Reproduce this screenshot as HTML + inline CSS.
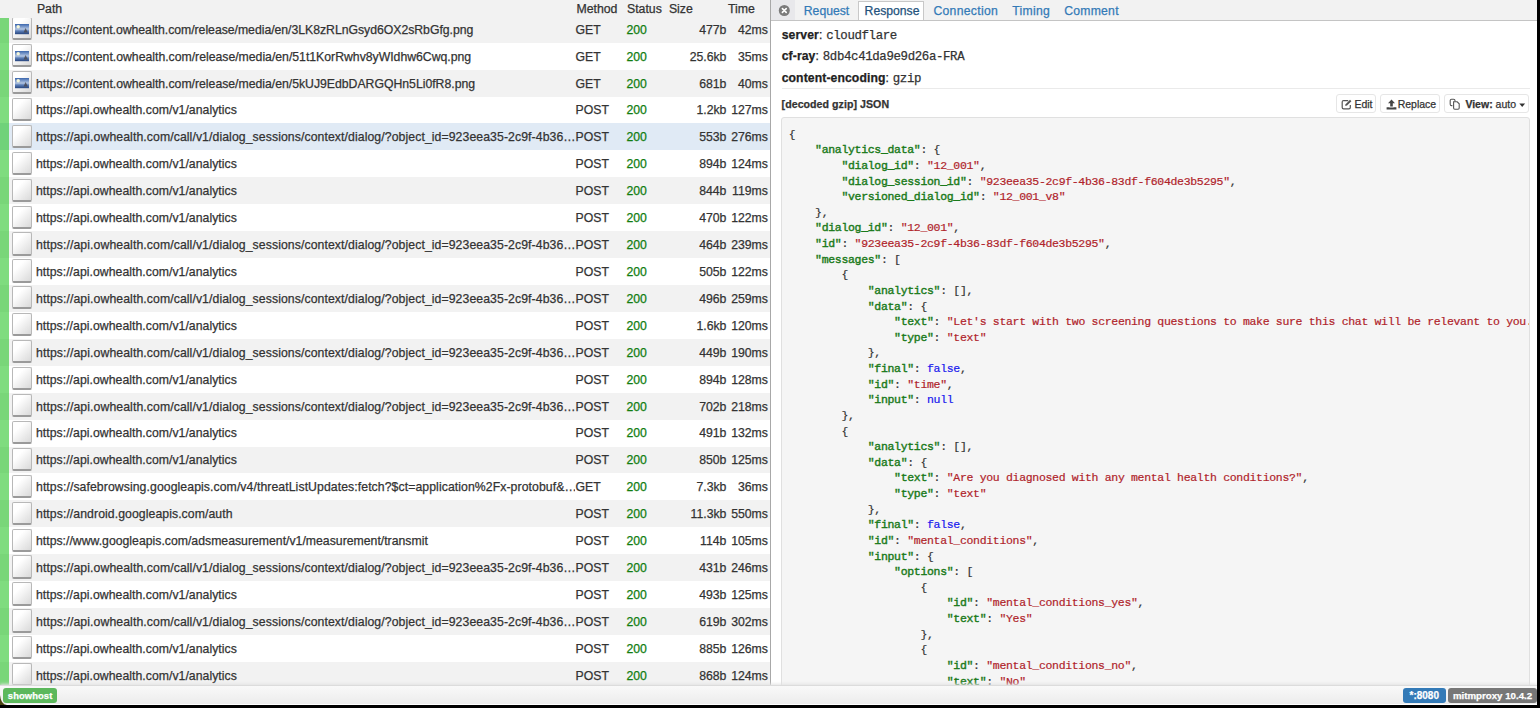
<!DOCTYPE html>
<html><head><meta charset="utf-8">
<style>
*{box-sizing:border-box}
html,body{margin:0;padding:0;width:1540px;height:708px;overflow:hidden;background:#000}
body{position:relative;-webkit-text-stroke:0.25px currentColor;font-family:"Liberation Sans",sans-serif;color:#333}
#app{position:absolute;left:0;top:0;width:1537px;height:705px;background:#fff;overflow:hidden}
#left{position:absolute;left:0;top:0;width:770px;height:685px;background:#fff;overflow:hidden}
.hdr{position:absolute;left:0;top:0;width:770px;height:17.8px;background:#f2f2f2;z-index:2;font-size:12.3px;color:#333}
.hdr span{position:absolute;top:1px;line-height:17.8px;white-space:nowrap}
.r{position:absolute;left:0;width:770px;height:26.92px;font-size:12.25px;line-height:26.92px;white-space:nowrap;color:#333}
.r.g{background:#f2f2f2}
.r.sel{background:#e0eaf5}
.r::before{content:"";position:absolute;left:0;top:0;width:9px;height:100%;background:rgba(0,185,0,0.5)}
.r span{position:absolute;top:0.9px}
.r .p{left:36px;width:539px;overflow:hidden}
.r .m{left:575.6px}
.r .st{left:626.4px;color:#117d11}
.r .sz{right:43.6px;text-align:right}
.r .tm{right:2.1px;text-align:right}
.ic{position:absolute;left:12px;top:1.3px;width:20px;height:23.2px;border:1px solid #b8b8b8;border-bottom:2px solid #9a9a9a;border-radius:2px;background:linear-gradient(135deg,#fff 30%,#d9d9d9)}
.ic.img b{position:absolute;left:2.5px;top:5px;width:13px;height:10px;background:linear-gradient(#4a77b8,#a9bfe0 55%,#3a5e98 75%,#2e4c80)}
#split{position:absolute;left:769.5px;top:0;width:1.5px;height:685px;background:#a8a8a8}
#right{position:absolute;left:771px;top:0;width:766px;height:685px;background:#fff;overflow:hidden}
.tabs{position:absolute;left:0;top:0;width:766px;height:21px;background:#f2f2f2;border-bottom:1px solid #c4c4c4}
.close{position:absolute;left:0;top:0;width:23.6px;height:20px;background:#e8e8eb}
.close i{position:absolute;left:7.8px;top:5.2px;width:11px;height:11px;border-radius:50%;background:#7a7a7a}
.tab{position:absolute;top:1.1px;line-height:20px;font-size:12.2px;color:#337ab7;white-space:nowrap}
.tab.act{top:1.3px;height:18.4px;background:#fff;border:1px solid #c8c8c8;border-bottom:none;color:#23527c;line-height:18px}
.hrow{position:absolute;left:10.7px;font-size:12px;white-space:nowrap;color:#222}
.hrow b{font-weight:bold;letter-spacing:0.1px;font-size:12.2px}
.hrow .v{font-family:"Liberation Mono",monospace;font-size:12.4px;letter-spacing:-0.36px;color:#333;margin-left:0.6px}
.sep{position:absolute;left:10.5px;top:88.3px;width:748px;height:1px;background:#eaeaea}
.ctitle{position:absolute;left:10.6px;top:98.4px;letter-spacing:0.05px;font-size:10.6px;font-weight:bold;color:#333;white-space:nowrap}
.btn{position:absolute;top:94.1px;height:18.5px;border:1px solid #e6e6e6;border-radius:3px;background:#fff;font-size:10.5px;color:#333;white-space:nowrap}
.btn span{position:absolute;top:2.6px;line-height:13px}
.bi{position:absolute}
.caret{position:absolute;left:75px;top:8px;width:0;height:0;border-left:2.9px solid transparent;border-right:2.9px solid transparent;border-top:3.4px solid #333}
pre{-webkit-text-stroke:0.2px currentColor;position:absolute;left:10.2px;top:117.2px;width:748.8px;height:600px;margin:0;border:1px solid #e0e0e0;border-radius:3px;background:#f5f5f5;padding:8.5px 0 0 6.6px;font-family:"Liberation Mono",monospace;font-size:11.5px;letter-spacing:-0.32px;line-height:15.63px;color:#333;overflow:hidden;white-space:pre}
pre .k{color:#1a7a1a;font-weight:normal;-webkit-text-stroke:0.4px currentColor}
pre .s{color:#b0232a}
pre .c{color:#1818ee}
#foot{position:absolute;left:0;top:684.7px;width:1537px;height:20.3px;background:linear-gradient(#f9f9f9,#ececec 95%,#fff 95%);border-top:1px solid #dcdcdc;box-shadow:0 -1px 3px #e2e2e2;z-index:5}
.lbl{position:absolute;top:2.6px;height:15.2px;border-radius:3px;color:#fff;font-weight:bold;font-size:10px;line-height:15.2px;text-align:center;white-space:nowrap}
</style></head><body>
<div id="app">
<div id="left">
<div class="hdr"><span style="left:36.9px">Path</span><span style="left:576.4px">Method</span><span style="left:627px">Status</span><span style="left:668.9px">Size</span><span style="left:727.9px">Time</span></div>
<div class="r g" style="top:15.80px"><i class="ic"><svg style="position:absolute;left:2.4px;top:5.8px" width="14" height="11" viewBox="0 0 14 11"><defs><linearGradient id="bg" x1="0" y1="0" x2="0" y2="1"><stop offset="0" stop-color="#3b66ad"/><stop offset="0.5" stop-color="#b4c6e2"/><stop offset="0.68" stop-color="#5c7fb8"/><stop offset="1" stop-color="#27447c"/></linearGradient></defs><rect x="0" y="0" width="14" height="10.2" fill="url(#bg)"/><circle cx="3.2" cy="2.8" r="1.7" fill="#f4f6d8"/><path d="M8.6 8.4L10.6 4L12.8 8.4Z" fill="#4a4a52" opacity="0.85"/></svg></i><span class="p" style="letter-spacing:-0.0265px">https://content.owhealth.com/release/media/en/3LK8zRLnGsyd6OX2sRbGfg.png</span><span class="m">GET</span><span class="st">200</span><span class="sz">477b</span><span class="tm">42ms</span></div>
<div class="r" style="top:42.72px"><i class="ic"><svg style="position:absolute;left:2.4px;top:5.8px" width="14" height="11" viewBox="0 0 14 11"><defs><linearGradient id="bg" x1="0" y1="0" x2="0" y2="1"><stop offset="0" stop-color="#3b66ad"/><stop offset="0.5" stop-color="#b4c6e2"/><stop offset="0.68" stop-color="#5c7fb8"/><stop offset="1" stop-color="#27447c"/></linearGradient></defs><rect x="0" y="0" width="14" height="10.2" fill="url(#bg)"/><circle cx="3.2" cy="2.8" r="1.7" fill="#f4f6d8"/><path d="M8.6 8.4L10.6 4L12.8 8.4Z" fill="#4a4a52" opacity="0.85"/></svg></i><span class="p" style="letter-spacing:-0.0088px">https://content.owhealth.com/release/media/en/51t1KorRwhv8yWIdhw6Cwq.png</span><span class="m">GET</span><span class="st">200</span><span class="sz">25.6kb</span><span class="tm">35ms</span></div>
<div class="r g" style="top:69.64px"><i class="ic"><svg style="position:absolute;left:2.4px;top:5.8px" width="14" height="11" viewBox="0 0 14 11"><defs><linearGradient id="bg" x1="0" y1="0" x2="0" y2="1"><stop offset="0" stop-color="#3b66ad"/><stop offset="0.5" stop-color="#b4c6e2"/><stop offset="0.68" stop-color="#5c7fb8"/><stop offset="1" stop-color="#27447c"/></linearGradient></defs><rect x="0" y="0" width="14" height="10.2" fill="url(#bg)"/><circle cx="3.2" cy="2.8" r="1.7" fill="#f4f6d8"/><path d="M8.6 8.4L10.6 4L12.8 8.4Z" fill="#4a4a52" opacity="0.85"/></svg></i><span class="p" style="letter-spacing:-0.0118px">https://content.owhealth.com/release/media/en/5kUJ9EdbDARGQHn5Li0fR8.png</span><span class="m">GET</span><span class="st">200</span><span class="sz">681b</span><span class="tm">40ms</span></div>
<div class="r" style="top:96.56px"><i class="ic"></i><span class="p" style="letter-spacing:0.0361px">https://api.owhealth.com/v1/analytics</span><span class="m">POST</span><span class="st">200</span><span class="sz">1.2kb</span><span class="tm">127ms</span></div>
<div class="r g sel" style="top:123.48px"><i class="ic"></i><span class="p" style="letter-spacing:0.087px">https://api.owhealth.com/call/v1/dialog_sessions/context/dialog/?object_id=923eea35-2c9f-4b36…</span><span class="m">POST</span><span class="st">200</span><span class="sz">553b</span><span class="tm">276ms</span></div>
<div class="r" style="top:150.40px"><i class="ic"></i><span class="p" style="letter-spacing:0.0361px">https://api.owhealth.com/v1/analytics</span><span class="m">POST</span><span class="st">200</span><span class="sz">894b</span><span class="tm">124ms</span></div>
<div class="r g" style="top:177.32px"><i class="ic"></i><span class="p" style="letter-spacing:0.0361px">https://api.owhealth.com/v1/analytics</span><span class="m">POST</span><span class="st">200</span><span class="sz">844b</span><span class="tm">119ms</span></div>
<div class="r" style="top:204.24px"><i class="ic"></i><span class="p" style="letter-spacing:0.0361px">https://api.owhealth.com/v1/analytics</span><span class="m">POST</span><span class="st">200</span><span class="sz">470b</span><span class="tm">122ms</span></div>
<div class="r g" style="top:231.16px"><i class="ic"></i><span class="p" style="letter-spacing:0.087px">https://api.owhealth.com/call/v1/dialog_sessions/context/dialog/?object_id=923eea35-2c9f-4b36…</span><span class="m">POST</span><span class="st">200</span><span class="sz">464b</span><span class="tm">239ms</span></div>
<div class="r" style="top:258.08px"><i class="ic"></i><span class="p" style="letter-spacing:0.0361px">https://api.owhealth.com/v1/analytics</span><span class="m">POST</span><span class="st">200</span><span class="sz">505b</span><span class="tm">122ms</span></div>
<div class="r g" style="top:285.00px"><i class="ic"></i><span class="p" style="letter-spacing:0.087px">https://api.owhealth.com/call/v1/dialog_sessions/context/dialog/?object_id=923eea35-2c9f-4b36…</span><span class="m">POST</span><span class="st">200</span><span class="sz">496b</span><span class="tm">259ms</span></div>
<div class="r" style="top:311.92px"><i class="ic"></i><span class="p" style="letter-spacing:0.0361px">https://api.owhealth.com/v1/analytics</span><span class="m">POST</span><span class="st">200</span><span class="sz">1.6kb</span><span class="tm">120ms</span></div>
<div class="r g" style="top:338.84px"><i class="ic"></i><span class="p" style="letter-spacing:0.087px">https://api.owhealth.com/call/v1/dialog_sessions/context/dialog/?object_id=923eea35-2c9f-4b36…</span><span class="m">POST</span><span class="st">200</span><span class="sz">449b</span><span class="tm">190ms</span></div>
<div class="r" style="top:365.76px"><i class="ic"></i><span class="p" style="letter-spacing:0.0361px">https://api.owhealth.com/v1/analytics</span><span class="m">POST</span><span class="st">200</span><span class="sz">894b</span><span class="tm">128ms</span></div>
<div class="r g" style="top:392.68px"><i class="ic"></i><span class="p" style="letter-spacing:0.087px">https://api.owhealth.com/call/v1/dialog_sessions/context/dialog/?object_id=923eea35-2c9f-4b36…</span><span class="m">POST</span><span class="st">200</span><span class="sz">702b</span><span class="tm">218ms</span></div>
<div class="r" style="top:419.60px"><i class="ic"></i><span class="p" style="letter-spacing:0.0361px">https://api.owhealth.com/v1/analytics</span><span class="m">POST</span><span class="st">200</span><span class="sz">491b</span><span class="tm">132ms</span></div>
<div class="r g" style="top:446.52px"><i class="ic"></i><span class="p" style="letter-spacing:0.0361px">https://api.owhealth.com/v1/analytics</span><span class="m">POST</span><span class="st">200</span><span class="sz">850b</span><span class="tm">125ms</span></div>
<div class="r" style="top:473.44px"><i class="ic"></i><span class="p" style="letter-spacing:0.078px">https://safebrowsing.googleapis.com/v4/threatListUpdates:fetch?$ct=application%2Fx-protobuf&amp;…</span><span class="m">GET</span><span class="st">200</span><span class="sz">7.3kb</span><span class="tm">36ms</span></div>
<div class="r g" style="top:500.36px"><i class="ic"></i><span class="p" style="letter-spacing:0.0706px">https://android.googleapis.com/auth</span><span class="m">POST</span><span class="st">200</span><span class="sz">11.3kb</span><span class="tm">550ms</span></div>
<div class="r" style="top:527.28px"><i class="ic"></i><span class="p" style="letter-spacing:0.0048px">https://www.googleapis.com/adsmeasurement/v1/measurement/transmit</span><span class="m">POST</span><span class="st">200</span><span class="sz">114b</span><span class="tm">105ms</span></div>
<div class="r g" style="top:554.20px"><i class="ic"></i><span class="p" style="letter-spacing:0.087px">https://api.owhealth.com/call/v1/dialog_sessions/context/dialog/?object_id=923eea35-2c9f-4b36…</span><span class="m">POST</span><span class="st">200</span><span class="sz">431b</span><span class="tm">246ms</span></div>
<div class="r" style="top:581.12px"><i class="ic"></i><span class="p" style="letter-spacing:0.0361px">https://api.owhealth.com/v1/analytics</span><span class="m">POST</span><span class="st">200</span><span class="sz">493b</span><span class="tm">125ms</span></div>
<div class="r g" style="top:608.04px"><i class="ic"></i><span class="p" style="letter-spacing:0.087px">https://api.owhealth.com/call/v1/dialog_sessions/context/dialog/?object_id=923eea35-2c9f-4b36…</span><span class="m">POST</span><span class="st">200</span><span class="sz">619b</span><span class="tm">302ms</span></div>
<div class="r" style="top:634.96px"><i class="ic"></i><span class="p" style="letter-spacing:0.0361px">https://api.owhealth.com/v1/analytics</span><span class="m">POST</span><span class="st">200</span><span class="sz">885b</span><span class="tm">126ms</span></div>
<div class="r g" style="top:661.88px"><i class="ic"></i><span class="p" style="letter-spacing:0.0361px">https://api.owhealth.com/v1/analytics</span><span class="m">POST</span><span class="st">200</span><span class="sz">868b</span><span class="tm">124ms</span></div></div>
<div id="split"></div>
<div id="right">
<div class="tabs">
<div class="close"><svg width="24" height="20" style="position:absolute;left:0;top:0"><circle cx="13.3" cy="10.5" r="5.5" fill="#7b7b7b"/><path d="M11.4 8.6L15.2 12.4M15.2 8.6L11.4 12.4" stroke="#fff" stroke-width="1.6" stroke-linecap="round"/></svg></div>
<span class="tab" style="left:32.8px">Request</span>
<span class="tab act" style="left:86.8px;width:66px;padding-left:5.8px">Response</span>
<span class="tab" style="left:162.4px;letter-spacing:0.3px">Connection</span>
<span class="tab" style="left:241.2px;letter-spacing:0.3px">Timing</span>
<span class="tab" style="left:293.2px;letter-spacing:0.25px">Comment</span>
</div>
<div class="hrow" style="top:28px"><b>server</b>: <span class="v">cloudflare</span></div>
<div class="hrow" style="top:49.4px"><b>cf-ray</b>: <span class="v">8db4c41da9e9d26a-FRA</span></div>
<div class="hrow" style="top:70.8px"><b>content-encoding</b>: <span class="v">gzip</span></div>
<div class="sep"></div>
<div class="ctitle">[decoded gzip] JSON</div>
<div class="btn" style="left:565.1px;width:40.3px"><svg class="bi" style="left:3.6px;top:3.6px" width="11" height="11" viewBox="0 0 11 11"><path d="M7.2 1.6H2.6Q1.2 1.6 1.2 3V8.4Q1.2 9.8 2.6 9.8H7.9Q9.3 9.8 9.3 8.4V6" fill="none" stroke="#555" stroke-width="1.2"/><path d="M4.2 7.1L4.6 5.2L9 0.8L10.4 2.2L6 6.6Z" fill="#555"/></svg><span style="left:17.3px">Edit</span></div>
<div class="btn" style="left:609.2px;width:59.6px"><svg class="bi" style="left:5px;top:3.8px" width="11" height="11" viewBox="0 0 11 11"><path d="M5.5 0.6L9 4.2H6.8V7.4H4.2V4.2H2Z" fill="#444"/><path d="M0.6 8.2H3.4V8.6H7.6V8.2H10.4V10.4H0.6Z" fill="#444"/></svg><span style="left:16.5px">Replace</span></div>
<div class="btn" style="left:672.9px;width:85.6px"><svg class="bi" style="left:4.6px;top:3.4px" width="12" height="12" viewBox="0 0 12 12"><path d="M3.4 7.6H2.6Q1.2 7.6 1.2 6.2V2.6Q1.2 1.2 2.6 1.2H4.6Q6 1.2 6 2.6V3.6" fill="none" stroke="#555" stroke-width="1.1"/><path d="M4.6 3.8H8.2L10.2 5.8V10Q10.2 11.2 9 11.2H5.8Q4.6 11.2 4.6 10Z" fill="none" stroke="#555" stroke-width="1.1"/></svg><span style="left:20.5px"><b>View:</b> auto</span><svg class="bi" style="left:74.6px;top:7.8px" width="7" height="5" viewBox="0 0 7 5"><path d="M0.3 0.6H6.1L3.2 4Z" fill="#333"/></svg></div>
<pre>
{
    <span class="k">"analytics_data"</span>: {
        <span class="k">"dialog_id"</span>: <span class="s">"12_001"</span>,
        <span class="k">"dialog_session_id"</span>: <span class="s">"923eea35-2c9f-4b36-83df-f604de3b5295"</span>,
        <span class="k">"versioned_dialog_id"</span>: <span class="s">"12_001_v8"</span>
    },
    <span class="k">"dialog_id"</span>: <span class="s">"12_001"</span>,
    <span class="k">"id"</span>: <span class="s">"923eea35-2c9f-4b36-83df-f604de3b5295"</span>,
    <span class="k">"messages"</span>: [
        {
            <span class="k">"analytics"</span>: [],
            <span class="k">"data"</span>: {
                <span class="k">"text"</span>: <span class="s">"Let&#x27;s start with two screening questions to make sure this chat will be relevant to you."</span>,
                <span class="k">"type"</span>: <span class="s">"text"</span>
            },
            <span class="k">"final"</span>: <span class="c">false</span>,
            <span class="k">"id"</span>: <span class="s">"time"</span>,
            <span class="k">"input"</span>: <span class="c">null</span>
        },
        {
            <span class="k">"analytics"</span>: [],
            <span class="k">"data"</span>: {
                <span class="k">"text"</span>: <span class="s">"Are you diagnosed with any mental health conditions?"</span>,
                <span class="k">"type"</span>: <span class="s">"text"</span>
            },
            <span class="k">"final"</span>: <span class="c">false</span>,
            <span class="k">"id"</span>: <span class="s">"mental_conditions"</span>,
            <span class="k">"input"</span>: {
                <span class="k">"options"</span>: [
                    {
                        <span class="k">"id"</span>: <span class="s">"mental_conditions_yes"</span>,
                        <span class="k">"text"</span>: <span class="s">"Yes"</span>
                    },
                    {
                        <span class="k">"id"</span>: <span class="s">"mental_conditions_no"</span>,
                        <span class="k">"text"</span>: <span class="s">"No"</span>
                    },</pre>
</div>
<div id="foot">
<div class="lbl" style="left:3px;width:54.2px;background:#5cb85c;font-size:9.4px;letter-spacing:0.1px">showhost</div>
<div class="lbl" style="left:1403px;width:42.5px;background:#337ab7">*:8080</div>
<div class="lbl" style="left:1448px;width:88.5px;background:#777;font-size:9.7px;padding-left:0.6px">mitmproxy 10.4.2</div>
</div>
</div>
<svg style="position:absolute;left:0;top:690px;z-index:10" width="12" height="18"><path d="M0 5Q0.8 14.5 7 15H0Z" fill="#4a4410"/></svg>
</body></html>
